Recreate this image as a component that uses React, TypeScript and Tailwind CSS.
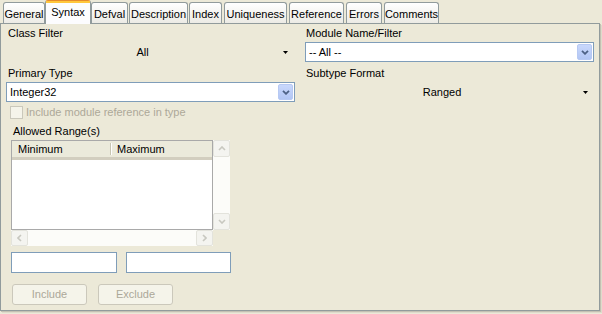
import React from 'react';

const tabs = [
  { label: 'General', w: 'w-[42px]', ml: 'ml-[3px]' },
  { label: 'Syntax', w: 'w-[46px]', ml: 'ml-0', active: true },
  { label: 'Defval', w: 'w-[37px]', ml: 'ml-0' },
  { label: 'Description', w: 'w-[59px]', ml: 'ml-[1px]' },
  { label: 'Index', w: 'w-[33px]', ml: 'ml-[1px]' },
  { label: 'Uniqueness', w: 'w-[63px]', ml: 'ml-[2px]' },
  { label: 'Reference', w: 'w-[55px]', ml: 'ml-[2px]' },
  { label: 'Errors', w: 'w-[36px]', ml: 'ml-[2px]' },
  { label: 'Comments', w: 'w-[55px]', ml: 'ml-[2px]' },
];

function Tab({ label, w, ml, active }: { label: string; w: string; ml: string; active?: boolean }) {
  if (active) {
    return (
      <div
        className={`${w} ${ml} relative z-10 -mb-[1px] flex h-[24px] flex-col rounded-t-[3px] border border-b-0 border-[#919b9c] border-t-[#e68b2c] bg-[#fcfcfe]`}
      >
        <div className="h-[2px] bg-[#ffc73c]" />
        <div className="flex flex-1 items-start justify-center pt-[3px]">{label}</div>
      </div>
    );
  }
  return (
    <div
      className={`${w} ${ml} flex h-[21px] items-center justify-center rounded-t-[3px] border border-b-0 border-[#919b9c] bg-linear-to-b from-white to-[#ecebe5] pt-[2px]`}
    >
      {label}
    </div>
  );
}

function SmallArrow() {
  return (
    <svg width="5" height="3" viewBox="0 0 5 3" className="block">
      <path d="M0 0H5L2.5 3Z" fill="#000" />
    </svg>
  );
}

function FlatCombo({ value, width }: { value: string; width: string }) {
  return (
    <div className={`${width} flex h-[20px] items-center`}>
      <div className="flex-1 pl-[2px] text-center">{value}</div>
      <div className="flex w-[17px] justify-center">
        <SmallArrow />
      </div>
    </div>
  );
}

function Combo({ value, width }: { value: string; width: string }) {
  return (
    <div className={`${width} flex h-[20px] border border-[#7f9db9] bg-white p-[1px]`}>
      <div className="flex flex-1 items-center pl-[2px]">{value}</div>
      <div className="flex w-[15px] items-center justify-center rounded-[2px] border border-[#b7c9f3] bg-linear-to-b from-[#c9d8fc] to-[#b2c6f4]">
        <svg width="8" height="5" viewBox="0 0 8 5">
          <path d="M1 0.8L4 3.8L7 0.8" fill="none" stroke="#4d6185" strokeWidth="1.8" />
        </svg>
      </div>
    </div>
  );
}

function ScrollButton({ dir, className }: { dir: 'up' | 'down' | 'left' | 'right'; className: string }) {
  const paths = {
    up: 'M1 4L4 1L7 4',
    down: 'M1 1L4 4L7 1',
    left: 'M4 1L1 4L4 7',
    right: 'M1 1L4 4L1 7',
  };
  const vert = dir === 'up' || dir === 'down';
  return (
    <div
      className={`${className} flex items-center justify-center rounded-[2px] border border-[#e3e3dc] bg-[#f4f4f0]`}
    >
      <svg width={vert ? 8 : 5} height={vert ? 5 : 8} viewBox={vert ? '0 0 8 5' : '0 0 5 8'}>
        <path d={paths[dir]} fill="none" stroke="#c8c8c0" strokeWidth="1.6" />
      </svg>
    </div>
  );
}

function RangeTable() {
  return (
    <div className="flex w-[219px] flex-col">
      <div className="flex h-[90px]">
        <div className="w-[202px] border border-[#a9a9a9] bg-white">
          <div className="flex h-[19px] border-b-[3px] border-[#d2cebf] bg-[#ebeadb]">
            <div className="flex w-[98px] items-center pl-[6px]">Minimum</div>
            <div className="my-[2px] w-[2px] border-l border-r border-l-[#c7c5b2] border-r-white" />
            <div className="flex flex-1 items-center pl-[5px]">Maximum</div>
          </div>
        </div>
        <div className="flex w-[17px] flex-col bg-[#fcfcf9]">
          <ScrollButton dir="up" className="h-[17px] w-[17px]" />
          <div className="flex-1" />
          <ScrollButton dir="down" className="h-[17px] w-[17px]" />
        </div>
      </div>
      <div className="flex h-[16px]">
        <div className="flex w-[202px] bg-[#fcfcf9]">
          <ScrollButton dir="left" className="h-[16px] w-[17px]" />
          <div className="flex-1" />
          <ScrollButton dir="right" className="h-[16px] w-[17px]" />
        </div>
      </div>
    </div>
  );
}

function DisabledButton({ label }: { label: string }) {
  return (
    <div className="flex h-[21px] w-[75px] items-center justify-center rounded-[3px] border border-[#cbc8bb] bg-[#f5f4ea] text-[#aca899]">
      {label}
    </div>
  );
}

export default function App() {
  return (
    <div className="h-[314px] w-[602px] overflow-hidden bg-[#ece9d8] font-['Liberation_Sans',Arial,sans-serif] text-[11px] leading-[13px] text-black">
      <div className="flex h-[23px] items-end">
        {tabs.map((t) => (
          <Tab key={t.label} {...t} />
        ))}
      </div>

      <div className="h-[288px] w-[600px] border border-[#919b9c] pl-[5px] pt-[3px] shadow-[1px_1px_0_#c4c1b3,2px_2px_0_#dedbcb]">
        <div className="grid grid-cols-[288px_289px] gap-x-[11px]">
          <div className="flex flex-col">
            <div className="h-[13px] pl-[2px]">Class Filter</div>
            <div className="mt-[2px]">
              <FlatCombo value="All" width="w-[288px]" />
            </div>
            <div className="mt-[5px] h-[13px] pl-[2px]">Primary Type</div>
            <div className="mt-[2px]">
              <Combo value="Integer32" width="w-[289px]" />
            </div>
            <div className="mt-[4px] flex h-[13px] items-center pl-[4px]">
              <div className="h-[13px] w-[13px] border border-[#cac8bb] bg-[#f5f4ea]" />
              <span className="ml-[3px] text-[#aca899]">Include module reference in type</span>
            </div>
            <div className="mt-[6px] h-[13px] pl-[7px]">Allowed Range(s)</div>
            <div className="mt-[2px] pl-[5px]">
              <RangeTable />
            </div>
            <div className="mt-[6px] flex gap-[9px] pl-[5px]">
              <div className="h-[21px] w-[106px] border border-[#7f9db9] bg-white" />
              <div className="h-[21px] w-[105px] border border-[#7f9db9] bg-white" />
            </div>
            <div className="mt-[11px] flex gap-[11px] pl-[6px]">
              <DisabledButton label="Include" />
              <DisabledButton label="Exclude" />
            </div>
          </div>

          <div className="flex flex-col">
            <div className="h-[13px] pl-[1px]">Module Name/Filter</div>
            <div className="mt-[2px]">
              <Combo value="-- All --" width="w-[289px]" />
            </div>
            <div className="mt-[5px] h-[13px] pl-[1px]">Subtype Format</div>
            <div className="mt-[2px]">
              <FlatCombo value="Ranged" width="w-[289px]" />
            </div>
          </div>
        </div>
      </div>
    </div>
  );
}
